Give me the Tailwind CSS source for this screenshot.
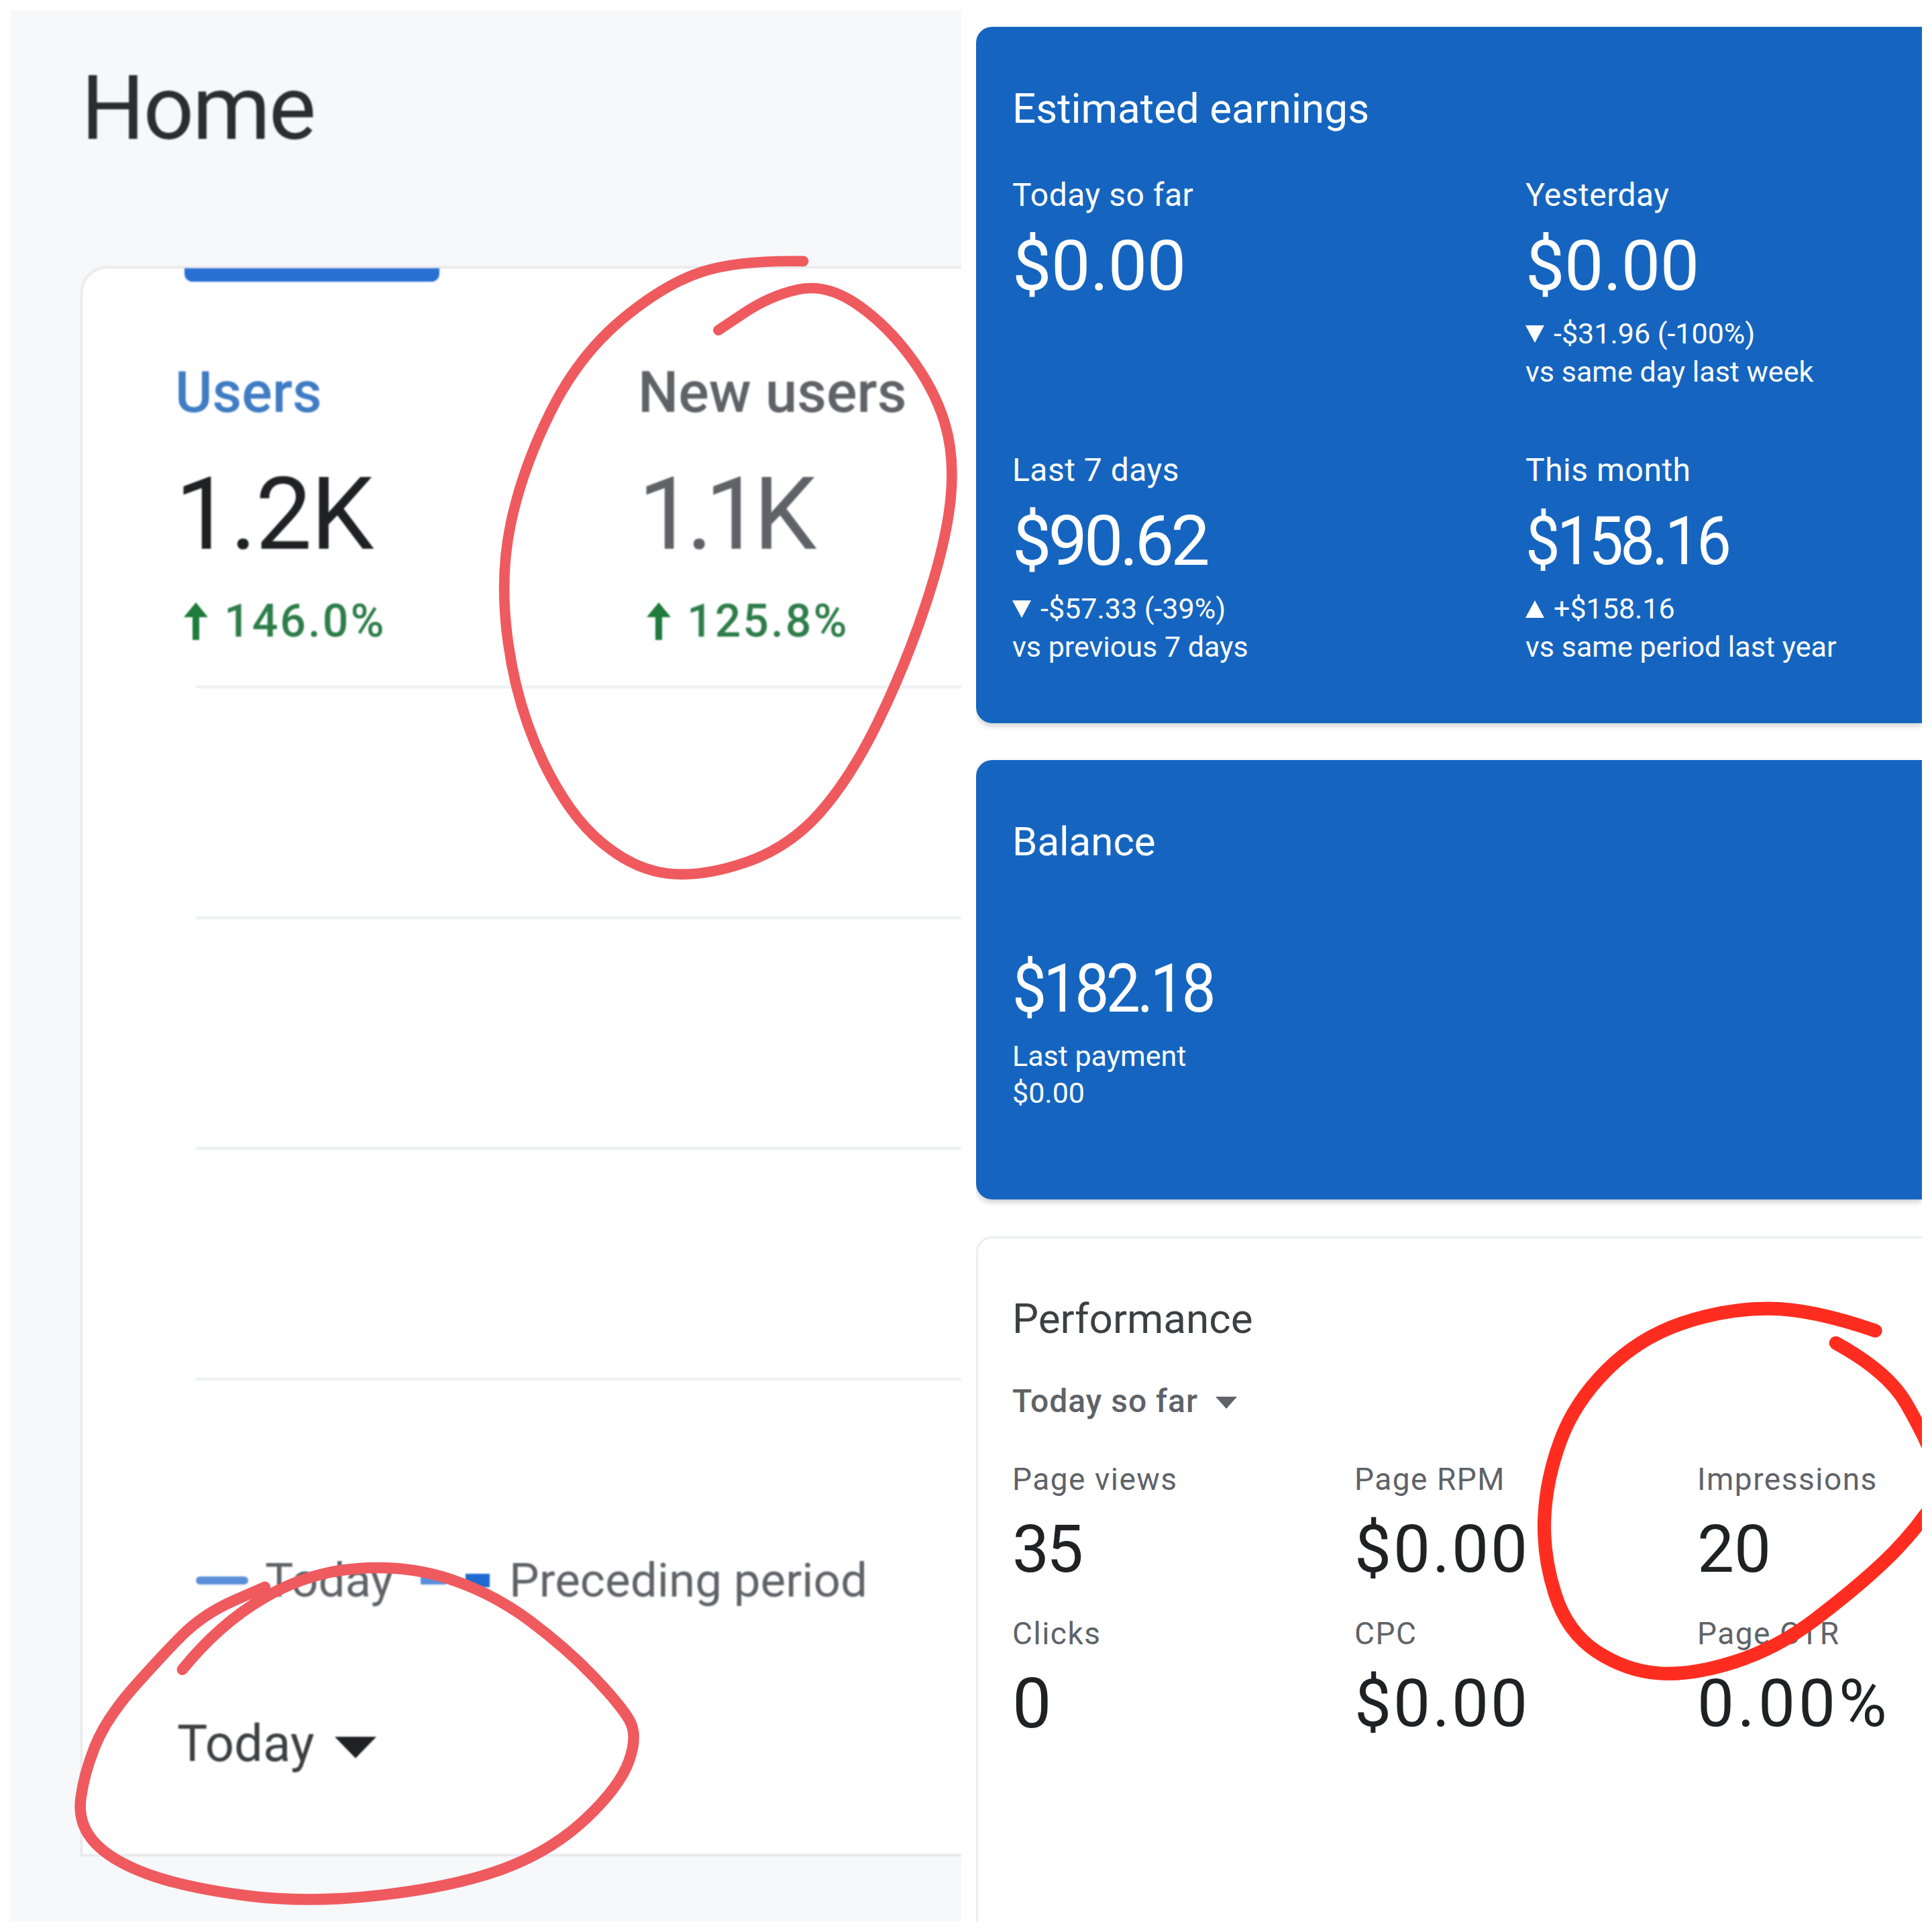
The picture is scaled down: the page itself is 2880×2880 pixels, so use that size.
<!DOCTYPE html>
<html lang="en">
<head>
  <meta charset="UTF-8" />
  <title>Home</title>
  <script src="https://cdn.jsdelivr.net/npm/@tailwindcss/browser@4"></script>
</head>
<body class="bg-white [font-family:Roboto,sans-serif]">
<div class="relative w-[2880px] h-[2880px] p-[15px] flex overflow-hidden bg-white">

  <!-- left: analytics -->
  <div class="w-[1418px] h-[2850px] bg-[#f6f8fa] flex flex-col overflow-hidden shrink-0">
    <h1 class="pl-[106px] pt-[80px] h-[382px] shrink-0 text-[133px] leading-[133px] text-[#2b2d30] tracking-[-2.5px] blur-[1px]">Home</h1>
    <div class="ml-[105px] h-[2370px] bg-white border-t-[3px] border-l-[3px] border-b-[3px] border-[#e3e5e8] rounded-tl-[40px] blur-[1.2px]">
      <div class="ml-[152px] w-[380px] h-[20px] bg-[#2a6fd2] rounded-b-[12px]"></div>
      <div class="flex pl-[138px]">
        <div class="w-[690px] shrink-0">
          <div class="pt-[125px] text-[85px] leading-[80px] font-medium text-[#3f7cc4] whitespace-nowrap">Users</div>
          <div class="mt-[62px] text-[150px] leading-[160px] text-[#202124] tracking-[-2px]">1.2K</div>
          <div class="mt-[44px] ml-[9px] flex items-center gap-[20px] text-[68px] leading-[70px] font-medium text-[#2e7d4a] tracking-[3px]">
            <svg width="44" height="60" viewBox="0 0 44 60"><path d="M22 2 40 24H27V58H17V24H4Z" fill="#1e7b3c"/></svg>
            <span>146.0%</span>
          </div>
        </div>
        <div class="w-[690px] shrink-0">
          <div class="pt-[125px] text-[85px] leading-[80px] font-medium text-[#5f6368] whitespace-nowrap">New users</div>
          <div class="mt-[62px] text-[150px] leading-[160px] text-[#5f6368] tracking-[-12px]">1.1K</div>
          <div class="mt-[44px] ml-[9px] flex items-center gap-[20px] text-[68px] leading-[70px] font-medium text-[#2e7d4a] tracking-[3px]">
            <svg width="44" height="60" viewBox="0 0 44 60"><path d="M22 2 40 24H27V58H17V24H4Z" fill="#1e7b3c"/></svg>
            <span>125.8%</span>
          </div>
        </div>
      </div>
      <div class="ml-[169px] mt-[61px]">
        <div class="h-[344px] border-t-[4px] border-[#eceef0]"></div>
        <div class="h-[344px] border-t-[4px] border-[#eceef0]"></div>
        <div class="h-[344px] border-t-[4px] border-[#eceef0]"></div>
        <div class="h-[262px] border-t-[4px] border-[#eceef0]"></div>
      </div>
      <div class="ml-[169px] flex items-center h-[80px] text-[71px] text-[#5f6368] whitespace-nowrap">
        <span class="w-[78px] h-[12px] bg-[#5b8fd9] rounded-full"></span>
        <span class="ml-[25px] w-[185px]">Today</span>
        <span class="ml-[47px] w-[38px] h-[12px] bg-[#5b8fd9]"></span>
        <span class="ml-[29px] w-[36px] h-[20px] bg-[#1f6ad0]"></span>
        <span class="ml-[29px]">Preceding period</span>
      </div>
      <div class="ml-[141px] mt-[163px] flex items-center h-[80px] text-[76px] text-[#3c4043]">
        <span>Today</span>
        <svg class="ml-[30px] mt-[12px]" width="62" height="32" viewBox="0 0 62 32"><path d="M0 0H62L31 32Z" fill="#202124"/></svg>
      </div>
    </div>
  </div>

  <!-- right: adsense -->
  <div class="ml-[22px] w-[1410px] h-[2850px] flex flex-col gap-[55px] pt-[25px] overflow-hidden shrink-0">
    <div class="h-[1038px] shrink-0 bg-[#1565c0] rounded-l-[24px] shadow-[0_4px_8px_rgba(0,0,0,0.2)] pl-[54px] pt-[87px] text-white">
      <div class="text-[62px] leading-[70px]">Estimated earnings</div>
      <div class="grid grid-cols-[765px_1fr] mt-[66px]">
        <div class="h-[410px]">
          <div class="text-[48px] leading-[56px] tracking-[0.5px]">Today so far</div>
          <div class="mt-[28px] text-[104px] leading-[100px] tracking-[-0.5px]">$0.00</div>
        </div>
        <div class="h-[410px]">
          <div class="text-[48px] leading-[56px] tracking-[0.5px]">Yesterday</div>
          <div class="mt-[28px] text-[104px] leading-[100px] tracking-[-0.5px]">$0.00</div>
          <div class="mt-[23px] flex items-center text-[43px] leading-[55px]">
            <svg class="mr-[14px]" width="28" height="26" viewBox="0 0 28 26"><path d="M0 0H28L14 26Z" fill="#fff"/></svg>
            <span>-$31.96 (-100%)</span>
          </div>
          <div class="mt-[2px] text-[43px] leading-[55px]">vs same day last week</div>
        </div>
        <div class="h-[410px]">
          <div class="text-[48px] leading-[56px] tracking-[0.5px]">Last 7 days</div>
          <div class="mt-[28px] text-[104px] leading-[100px] tracking-[-5px]">$90.62</div>
          <div class="mt-[23px] flex items-center text-[43px] leading-[55px]">
            <svg class="mr-[14px]" width="28" height="26" viewBox="0 0 28 26"><path d="M0 0H28L14 26Z" fill="#fff"/></svg>
            <span>-$57.33 (-39%)</span>
          </div>
          <div class="mt-[2px] text-[43px] leading-[55px]">vs previous 7 days</div>
        </div>
        <div class="h-[410px]">
          <div class="text-[48px] leading-[56px] tracking-[0.5px]">This month</div>
          <div class="mt-[28px] text-[100px] leading-[100px] tracking-[-5px] w-fit origin-left scale-x-[0.92]">$158.16</div>
          <div class="mt-[23px] flex items-center text-[43px] leading-[55px]">
            <svg class="mr-[14px]" width="28" height="26" viewBox="0 0 28 26"><path d="M14 0 28 26H0Z" fill="#fff"/></svg>
            <span>+$158.16</span>
          </div>
          <div class="mt-[2px] text-[43px] leading-[55px]">vs same period last year</div>
        </div>
      </div>
    </div>

    <div class="h-[655px] shrink-0 bg-[#1565c0] rounded-l-[24px] shadow-[0_4px_8px_rgba(0,0,0,0.2)] pl-[54px] pt-[87px] text-white">
      <div class="text-[60px] leading-[70px]">Balance</div>
      <div class="mt-[134px] text-[100px] leading-[100px] tracking-[-5px] w-fit origin-left scale-x-[0.91]">$182.18</div>
      <div class="mt-[23px] text-[43px] leading-[55px]">Last payment</div>
      <div class="text-[43px] leading-[55px]">$0.00</div>
    </div>

    <div class="h-[1022px] shrink-0 bg-white border-t-[3px] border-l-[3px] border-[#eceef0] rounded-tl-[24px] pl-[51px] pt-[85px]">
      <div class="text-[62px] leading-[70px] text-[#3c4043]">Performance</div>
      <div class="mt-[60px] flex items-center text-[48px] leading-[56px] font-medium text-[#5f6368] tracking-[1px]">
        <span>Today so far</span>
        <svg class="ml-[26px] mt-[4px]" width="32" height="18" viewBox="0 0 32 18"><path d="M0 0H32L16 18Z" fill="#5f6368"/></svg>
      </div>
      <div class="grid grid-cols-[510px_511px_1fr] mt-[60px]">
        <div class="h-[230px]"><div class="text-[46px] leading-[56px] text-[#5f6368] tracking-[1.5px]">Page views</div><div class="mt-[27px] text-[98px] leading-[100px] text-[#202124] tracking-[-4px]">35</div></div>
        <div class="h-[230px]"><div class="text-[46px] leading-[56px] text-[#5f6368] tracking-[1.5px]">Page RPM</div><div class="mt-[27px] text-[98px] leading-[100px] text-[#202124] tracking-[3px]">$0.00</div></div>
        <div class="h-[230px]"><div class="text-[46px] leading-[56px] text-[#5f6368] tracking-[1.5px]">Impressions</div><div class="mt-[27px] text-[98px] leading-[100px] text-[#202124]">20</div></div>
        <div class="h-[230px]"><div class="text-[46px] leading-[56px] text-[#5f6368] tracking-[1.5px]">Clicks</div><div class="mt-[27px] text-[104px] leading-[100px] text-[#202124]">0</div></div>
        <div class="h-[230px]"><div class="text-[46px] leading-[56px] text-[#5f6368] tracking-[1.5px]">CPC</div><div class="mt-[27px] text-[98px] leading-[100px] text-[#202124] tracking-[3px]">$0.00</div></div>
        <div class="h-[230px]"><div class="text-[46px] leading-[56px] text-[#5f6368] tracking-[1.5px]">Page CTR</div><div class="mt-[27px] text-[98px] leading-[100px] text-[#202124] tracking-[5px]">0.00%</div></div>
      </div>
    </div>
  </div>

  <!-- hand drawn marks over the screenshot -->
  <svg class="absolute left-0 top-0 pointer-events-none" width="2865" height="2880" viewBox="0 0 1559.8 1568" fill="none" stroke-linecap="round" stroke-linejoin="round">
    <path data-pts="652,212 600,211 540,230 470,288 424,380 405,470 420,575 462,662 515,706 570,712 640,688 690,632 735,540 768,440 775,370 758,315 718,262 670,230 625,240 583,268" stroke="#ef5a5f" stroke-width="8.5"/>
    <path data-pts="148,1355 178,1318 250,1276 330,1270 400,1293 460,1338 503,1383 518,1408 503,1450 448,1502 370,1531 250,1545 150,1532 90,1510 63,1480 68,1440 86,1395 130,1345 165,1310 215,1288" stroke="#ef5a5f" stroke-width="9"/>
    <path data-pts="1522,1080 1470,1062 1400,1062 1330,1086 1278,1138 1255,1200 1252,1262 1272,1325 1320,1356 1372,1360 1442,1338 1505,1290 1548,1250 1580,1205" stroke="#ff2d20" stroke-width="11"/>
    <path data-pts="1490,1090 1532,1113 1562,1165 1575,1200" stroke="#ff2d20" stroke-width="11"/>
  </svg>
</div>
<script>
// smooth the hand drawn strokes through midpoints
document.querySelectorAll("path[data-pts]").forEach(el => {
  const p = el.dataset.pts.split(" ").map(s => s.split(",").map(Number));
  let d = `M${p[0]}`;
  for (let i = 1; i < p.length - 1; i++) {
    const mx = (p[i][0] + p[i+1][0]) / 2, my = (p[i][1] + p[i+1][1]) / 2;
    d += `Q${p[i]} ${mx},${my}`;
  }
  el.setAttribute("d", d + `L${p[p.length-1]}`);
});
</script>
</body>
</html>
